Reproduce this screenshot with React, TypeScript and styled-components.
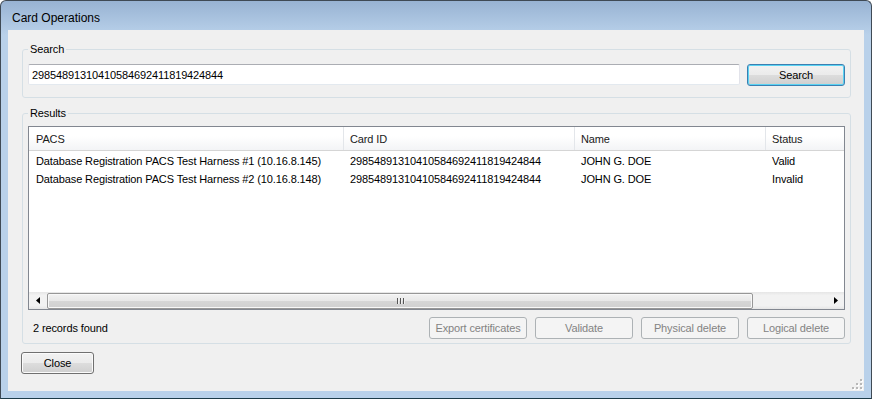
import React from 'react';
import styled, { createGlobalStyle, css } from 'styled-components';

const GlobalStyle = createGlobalStyle`
    html, body {
        margin: 0;
        padding: 0;
        background: #ffffff;
    }
    body {
        font-family: 'Liberation Sans', Arial, sans-serif;
        font-size: 11px;
        letter-spacing: -0.12px;
        color: #000000;
    }
    * {
        box-sizing: border-box;
    }
`;

const Window = styled.div`
    width: 872px;
    height: 399px;
    display: flex;
    flex-direction: column;
    border: 1px solid #3f4a55;
    border-bottom-color: #1d3b48;
    border-radius: 6px 6px 0 0;
    background: linear-gradient(to bottom, #98b3d3 0px, #b9d1ea 34px, #b9d1ea 100%);
    overflow: hidden;
`;

const TitleBar = styled.div`
    height: 29px;
    flex: none;
    display: flex;
    align-items: center;
    padding: 4px 0 0 11px;
`;

const Title = styled.span`
    font-family: 'Liberation Sans', Arial, sans-serif;
    font-size: 12px;
    letter-spacing: 0;
    color: #000000;
`;

const Client = styled.div`
    position: relative;
    flex: 1;
    margin: 0 7px 7px 7px;
    background: #f0f0f0;
    display: flex;
    flex-direction: column;
    padding: 13px 13px 0 13px;
`;

const GroupBox = styled.fieldset<{ $gapTop?: number }>`
    margin: ${({ $gapTop }) => $gapTop ?? 0}px 0 0 1px;
    padding: 8px 5px 11px 5px;
    border: 1px solid #d5dfe5;
    border-radius: 3px;
    min-width: 0;
`;

const Legend = styled.legend`
    margin-left: 0;
    padding: 0 2px;
    line-height: 13px;
    font-size: 11px;
    color: #000000;
`;

const SearchRow = styled.div`
    display: flex;
    align-items: flex-start;
    gap: 7px;
`;

const TextBox = styled.div`
    flex: 1;
    height: 21px;
    background: #ffffff;
    border: 1px solid #dbdfe6;
    border-top-color: #abadb3;
    border-left-color: #e2e3ea;
    border-right-color: #e2e3ea;
    border-bottom-color: #e3e9ef;
    border-radius: 2px;
    padding: 0 3px;
    display: flex;
    align-items: center;
    white-space: nowrap;
`;

type ButtonKind = 'default' | 'normal' | 'disabled';

const Button = styled.button<{ $kind: ButtonKind; $width: number }>`
    width: ${({ $width }) => $width}px;
    height: 22px;
    flex: none;
    padding: 0;
    font-family: 'Liberation Sans', Arial, sans-serif;
    font-size: 11px;
    letter-spacing: -0.12px;
    border-radius: 3px;
    color: #000000;
    border: 1px solid #707070;
    background: linear-gradient(to bottom, #f2f2f2 0%, #ebebeb 50%, #dddddd 50%, #cfcfcf 100%);
    box-shadow: inset 0 0 0 1px #fbfbfb;
    ${({ $kind }) =>
        $kind === 'default' &&
        css`
            border-color: #3c7fb1;
            box-shadow: inset 0 0 0 1px #5ad3f3;
        `}
    ${({ $kind }) =>
        $kind === 'disabled' &&
        css`
            border-color: #adb2b5;
            background: #f4f4f4;
            box-shadow: none;
            color: #838383;
        `}
`;

const ListView = styled.div`
    height: 184px;
    border: 1px solid #828790;
    background: #ffffff;
    display: flex;
    flex-direction: column;
    overflow: hidden;
`;

const Grid = styled.div`
    display: grid;
    grid-template-columns: 315px 231px 191px 200px;
    flex: none;
`;

const HeaderRow = styled(Grid)`
    height: 24px;
    background: linear-gradient(to bottom, #ffffff 0%, #ffffff 40%, #f3f4f6 100%);
    border-bottom: 1px solid #d5d5d5;
`;

const HeaderCell = styled.div`
    display: flex;
    align-items: center;
    padding: 1px 0 0 6px;
    border-right: 1px solid #e3e6ea;
    white-space: nowrap;
    color: #1a1a1a;
    &:first-child {
        padding-left: 7px;
    }
`;

const Body = styled.div`
    flex: 1;
    padding-top: 1px;
`;

const Row = styled(Grid)`
    height: 18px;
`;

const Cell = styled.div`
    display: flex;
    align-items: center;
    padding-left: 6px;
    white-space: nowrap;
    overflow: hidden;
    &:first-child {
        padding-left: 7px;
    }
`;

const ScrollBar = styled.div`
    height: 17px;
    flex: none;
    display: flex;
    background: linear-gradient(to bottom, #e6e6e6 0%, #f2f2f2 20%, #f2f2f2 80%, #e6e6e6 100%);
`;

const ScrollArrow = styled.div`
    width: 17px;
    height: 17px;
    flex: none;
    display: flex;
    align-items: center;
    justify-content: center;
`;

const Track = styled.div`
    flex: 1;
    display: flex;
    align-items: center;
    padding-left: 1px;
`;

const Thumb = styled.div`
    width: 706px;
    height: 16px;
    border: 1px solid #979797;
    border-radius: 2px;
    background: linear-gradient(to bottom, #f2f2f2 0%, #e8e8e8 50%, #d6d6d6 51%, #d0d0d0 100%);
    box-shadow: inset 0 0 0 1px #f8f8f8;
    display: flex;
    align-items: center;
    justify-content: center;
`;

const Grip = styled.div`
    display: flex;
    gap: 1px;
    div {
        width: 1px;
        height: 6px;
        background: #555555;
        box-shadow: 1px 0 0 #f0f0f0;
    }
    div + div {
        margin-left: 1px;
    }
`;

const Footer = styled.div`
    margin-top: 7px;
    display: flex;
    align-items: center;
    justify-content: space-between;
    height: 22px;
`;

const StatusText = styled.span`
    padding-left: 5px;
`;

const ButtonGroup = styled.div`
    display: flex;
    gap: 8px;
`;

const ResultsBox = styled(GroupBox)`
    padding: 6px 5px 4px 5px;
`;

const CloseRow = styled.div`
    margin-top: 8px;
    display: flex;
`;

const SizeGrip = styled.svg`
    position: absolute;
    right: 1px;
    bottom: 1px;
`;

const cardId = '29854891310410584692411819424844';

const rows = [
    { pacs: 'Database Registration PACS Test Harness #1 (10.16.8.145)', card: cardId, name: 'JOHN G. DOE', status: 'Valid' },
    { pacs: 'Database Registration PACS Test Harness #2 (10.16.8.148)', card: cardId, name: 'JOHN G. DOE', status: 'Invalid' },
];

const columns = ['PACS', 'Card ID', 'Name', 'Status'];

const actions = ['Export certificates', 'Validate', 'Physical delete', 'Logical delete'];

const gripDots = [
    [8, 0],
    [4, 4],
    [8, 4],
    [0, 8],
    [4, 8],
    [8, 8],
];

export default function App() {
    return (
        <>
            <GlobalStyle />
            <Window>
                <TitleBar>
                    <Title>Card Operations</Title>
                </TitleBar>
                <Client>
                    <GroupBox>
                        <Legend>Search</Legend>
                        <SearchRow>
                            <TextBox>{cardId}</TextBox>
                            <Button $kind="default" $width={98}>
                                Search
                            </Button>
                        </SearchRow>
                    </GroupBox>

                    <ResultsBox $gapTop={9}>
                        <Legend>Results</Legend>
                        <ListView>
                            <HeaderRow>
                                {columns.map((c) => (
                                    <HeaderCell key={c}>{c}</HeaderCell>
                                ))}
                            </HeaderRow>
                            <Body>
                                {rows.map((r) => (
                                    <Row key={r.pacs}>
                                        <Cell>{r.pacs}</Cell>
                                        <Cell>{r.card}</Cell>
                                        <Cell>{r.name}</Cell>
                                        <Cell>{r.status}</Cell>
                                    </Row>
                                ))}
                            </Body>
                            <ScrollBar>
                                <ScrollArrow>
                                    <svg width="4" height="7" viewBox="0 0 4 7">
                                        <polygon points="4,0 4,7 0,3.5" fill="#000000" />
                                    </svg>
                                </ScrollArrow>
                                <Track>
                                    <Thumb>
                                        <Grip>
                                            <div />
                                            <div />
                                            <div />
                                        </Grip>
                                    </Thumb>
                                </Track>
                                <ScrollArrow>
                                    <svg width="4" height="7" viewBox="0 0 4 7">
                                        <polygon points="0,0 0,7 4,3.5" fill="#000000" />
                                    </svg>
                                </ScrollArrow>
                            </ScrollBar>
                        </ListView>
                        <Footer>
                            <StatusText>2 records found</StatusText>
                            <ButtonGroup>
                                {actions.map((a) => (
                                    <Button key={a} $kind="disabled" $width={98} disabled>
                                        {a}
                                    </Button>
                                ))}
                            </ButtonGroup>
                        </Footer>
                    </ResultsBox>

                    <CloseRow>
                        <Button $kind="normal" $width={73}>
                            Close
                        </Button>
                    </CloseRow>

                    <SizeGrip width="11" height="11" viewBox="0 0 11 11">
                        {gripDots.map(([x, y]) => (
                            <g key={`${x}-${y}`}>
                                <rect x={x + 1} y={y + 1} width="2" height="2" fill="#ffffff" />
                                <rect x={x} y={y} width="2" height="2" fill="#b8b8b8" />
                            </g>
                        ))}
                    </SizeGrip>
                </Client>
            </Window>
        </>
    );
}
